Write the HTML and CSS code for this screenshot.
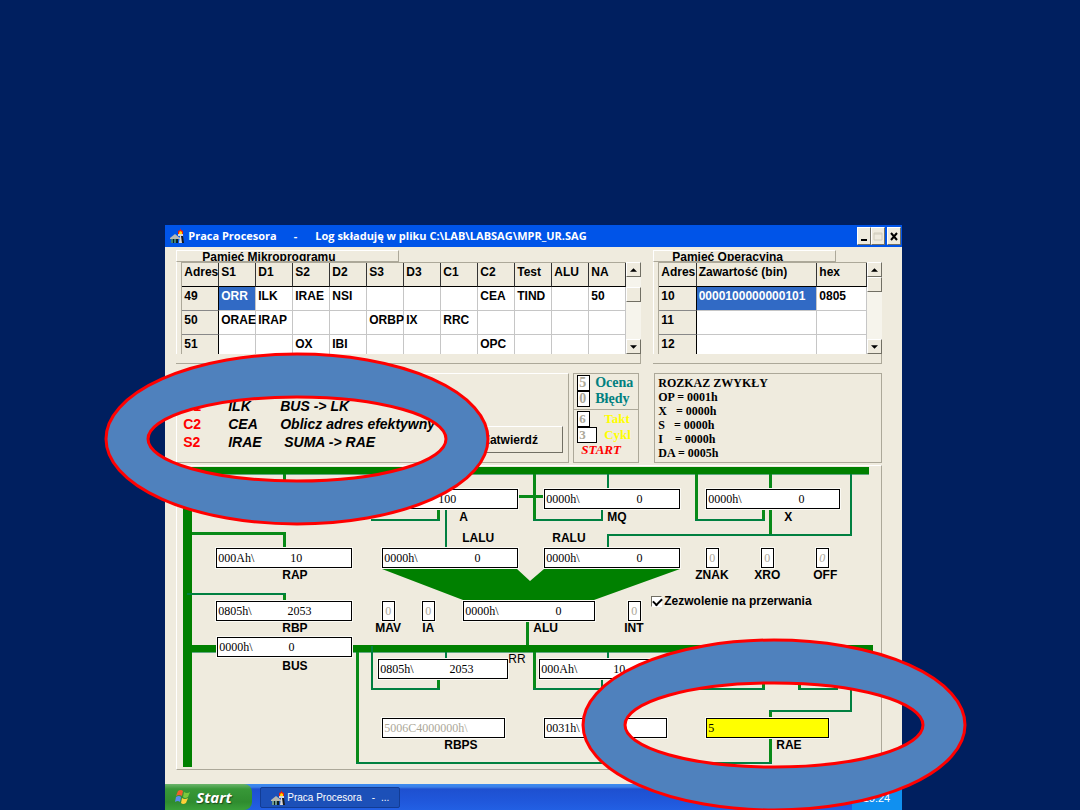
FILE: index.html
```html
<!DOCTYPE html>
<html lang="pl">
<head>
<meta charset="utf-8">
<title>Praca Procesora</title>
<link rel="stylesheet" href="styles.css">
</head>
<body>
<main class="slide">
<div class="screen">
  <header class="titlebar">
    <svg class="app-icon" viewBox="0 0 16 16" aria-hidden="true">
      <path d="M1 10l5-4 5 4v1H1z" fill="#b8b8b0"/>
      <path d="M2 11h2v4H2zM5 11h2v4H5z" fill="#3c8078"/>
      <path d="M4 11h1v4H4zM7 11h2v4H7z" fill="#102020"/>
      <path d="M9 6h5v2h-1l1 7h-4l1-7H9z" fill="#d8d8d8"/>
      <path d="M12 8h2l1 7h-2z" fill="#181818"/>
      <path d="M11 0l1 2 2 1v3H9V3l2-1z" fill="#f02010"/>
      <path d="M11 3l2 1v2h-3V5z" fill="#ffd800"/>
    </svg>
    <span class="title-name">Praca Procesora</span>
    <span class="title-dash">-</span>
    <span class="title-log">Log składuję w pliku C:\LAB\LABSAG\MPR_UR.SAG</span>
    <span class="win-buttons">
      <button type="button" class="win-btn" aria-label="Minimalizuj"><svg viewBox="0 0 12 14"><path d="M3 11h6" stroke="#000" stroke-width="2"/></svg></button>
      <button type="button" class="win-btn" aria-label="Maksymalizuj" disabled><svg viewBox="0 0 12 14"><path d="M2 4h8v7H2zM2 5h8" stroke="#d0ccbc" fill="none"/></svg></button>
      <button type="button" class="win-btn win-close" aria-label="Zamknij"><svg viewBox="0 0 12 14"><path d="M3 4l6 7M9 4l-6 7" stroke="#000" stroke-width="2"/></svg></button>
    </span>
  </header>

  <div class="work">
    <div class="row row-memory">
      <section class="group">
        <h2 class="legend">Pamięć Mikroprogramu</h2>
        <div class="grid-wrap">
          <table class="grid">
            <thead><tr><th>Adres</th><th>S1</th><th>D1</th><th>S2</th><th>D2</th><th>S3</th><th>D3</th><th>C1</th><th>C2</th><th>Test</th><th>ALU</th><th>NA</th></tr></thead>
            <tbody>
              <tr><th>49</th><td class="selected">ORR</td><td>ILK</td><td>IRAE</td><td>NSI</td><td></td><td></td><td></td><td>CEA</td><td>TIND</td><td></td><td>50</td></tr>
              <tr><th>50</th><td>ORAE</td><td>IRAP</td><td></td><td></td><td>ORBP</td><td>IX</td><td>RRC</td><td></td><td></td><td></td><td></td></tr>
              <tr class="cut"><th>51</th><td></td><td></td><td>OX</td><td>IBI</td><td></td><td></td><td></td><td>OPC</td><td></td><td></td><td></td></tr>
            </tbody>
          </table>
          <div class="scroll">
            <button type="button" class="arrow" aria-label="W górę"><svg viewBox="0 0 8 4"><path d="M0 4l4-4 4 4z"/></svg></button>
            <div class="track track-low"><div class="thumb"></div></div>
            <button type="button" class="arrow" aria-label="W dół"><svg viewBox="0 0 8 4"><path d="M0 0h8L4 4z"/></svg></button>
          </div>
        </div>
        <div class="group-foot"></div>
      </section>
      <section class="group">
        <h2 class="legend legend-op">Pamięć Operacyjna</h2>
        <div class="grid-wrap">
          <table class="grid">
            <colgroup><col class="col-adr"><col class="col-bin"><col class="col-hex"></colgroup>
            <thead><tr><th>Adres</th><th>Zawartość (bin)</th><th>hex</th></tr></thead>
            <tbody>
              <tr><th>10</th><td class="selected">0000100000000101</td><td>0805</td></tr>
              <tr><th>11</th><td></td><td></td></tr>
              <tr class="cut"><th>12</th><td></td><td></td></tr>
            </tbody>
          </table>
          <div class="scroll">
            <button type="button" class="arrow" aria-label="W górę"><svg viewBox="0 0 8 4"><path d="M0 4l4-4 4 4z"/></svg></button>
            <div class="track"><div class="thumb"></div></div>
            <button type="button" class="arrow" aria-label="W dół"><svg viewBox="0 0 8 4"><path d="M0 0h8L4 4z"/></svg></button>
          </div>
        </div>
        <div class="group-foot"></div>
      </section>
    </div>

    <div class="row row-status">
      <section class="panel micro">
        <dl class="ops">
          <dt>D1</dt><dd>ILK</dd><dd>BUS -&gt; LK</dd>
          <dt>C2</dt><dd>CEA</dd><dd>Oblicz adres efektywny</dd>
          <dt>S2</dt><dd>IRAE</dd><dd class="op-in">SUMA -&gt; RAE</dd>
        </dl>
        <button type="button" class="confirm">Zatwierdź</button>
      </section>
      <section class="panel score">
        <div class="score-part teal">
          <div class="score-line"><input id="ocena" class="tiny" value="5" readonly><label for="ocena">Ocena</label></div>
          <div class="score-line"><input id="bledy" class="tiny" value="0" readonly><label for="bledy">Błędy</label></div>
        </div>
        <div class="score-part yellow">
          <div class="score-line"><input id="takt" class="tiny" value="6" readonly><label for="takt">Takt</label></div>
          <div class="score-line"><input id="cykl" class="tiny tiny-wide" value="3" readonly><label for="cykl">Cykl</label></div>
          <div class="start-text">START</div>
        </div>
      </section>
      <section class="panel order">
        <p>ROZKAZ ZWYKŁY</p>
        <p>OP = 0001h</p>
        <p>X   = 0000h</p>
        <p>S   = 0000h</p>
        <p>I    = 0000h</p>
        <p>DA = 0005h</p>
      </section>
    </div>

    <section class="diagram">
      <svg class="wires" viewBox="176 465 706 304" width="706" height="304" aria-hidden="true">
        <g class="bus">
          <path d="M183 467.500H869M183 474.500H869M183 645.500H873M187 652.500H873" class="edge"/>
          <path d="M183 467h686v7H183zM183 474h9v293h-9zM187 645h686v7H187z"/>
          <path d="M382 569H517L530 581L544 569H680L594 600H463z"/>
        </g>
        <g class="thick">
          <path d="M284.500 474V482M192 533.500H284.500V548M284.500 595V601"/>
          <path d="M438.500 509V520M517 496.500H544M534.500 474V520M696.500 474V520M763.500 509V520M770.500 474V489M770.500 509V535"/>
          <path d="M527.500 622V645M438.500 678V689M534.500 652V689M763.500 680V689M799.500 680V689M770.500 712V718M770.500 738V763M357.500 652V763"/>
        </g>
        <g class="thin">
          <path d="M187 594H286M371 520H440M446 509V548M533 520H602V509M608 474V489M695 520H765M608 548V535H851V474"/>
          <path d="M446 652V658M372 646V689H440M533 689H765M602 678V689M608 652V658M798 689H838M851 652V711H769M356 763H772"/>
        </g>
      </svg>

      <input id="a" class="reg reg-a" value="                  100" readonly><label for="a" class="tag tag-a">A</label>
      <input id="mq" class="reg reg-mq" value="0000h\                   0" readonly><label for="mq" class="tag tag-mq">MQ</label>
      <input id="x" class="reg reg-x" value="0000h\                   0" readonly><label for="x" class="tag tag-x">X</label>
      <input id="rap" class="reg reg-rap" value="000Ah\            10" readonly><label for="rap" class="tag tag-rap">RAP</label>
      <input id="lalu" class="reg reg-lalu" value="0000h\                   0" readonly><label for="lalu" class="tag tag-lalu">LALU</label>
      <input id="ralu" class="reg reg-ralu" value="0000h\                   0" readonly><label for="ralu" class="tag tag-ralu">RALU</label>
      <input id="znak" class="reg flag reg-znak" value="0" readonly><label for="znak" class="tag tag-znak">ZNAK</label>
      <input id="xro" class="reg flag reg-xro" value="0" readonly><label for="xro" class="tag tag-xro">XRO</label>
      <input id="off" class="reg flag reg-off" value="0" readonly><label for="off" class="tag tag-off">OFF</label>
      <input id="rbp" class="reg reg-rbp" value="0805h\            2053" readonly><label for="rbp" class="tag tag-rbp">RBP</label>
      <input id="bus" class="reg reg-bus" value="0000h\            0" readonly><label for="bus" class="tag tag-bus">BUS</label>
      <input id="mav" class="reg flag reg-mav" value="0" readonly><label for="mav" class="tag tag-mav">MAV</label>
      <input id="ia" class="reg flag reg-ia" value="0" readonly><label for="ia" class="tag tag-ia">IA</label>
      <input id="alu" class="reg reg-alu" value="0000h\                   0" readonly><label for="alu" class="tag tag-alu">ALU</label>
      <input id="int" class="reg flag reg-int" value="0" readonly><label for="int" class="tag tag-int">INT</label>
      <input id="rr" class="reg reg-rr" value="0805h\            2053" readonly><label for="rr" class="tag tag-rr">RR</label>
      <input class="reg reg-lk" aria-label="LK" value="000Ah\            10" readonly>
      <input id="rbps" class="reg dim reg-rbps" value="5006C4000000h\" readonly><label for="rbps" class="tag tag-rbps">RBPS</label>
      <input class="reg reg-lr" aria-label="LR" value="0031h\" readonly>
      <input id="rae" class="reg reg-rae" value="5" readonly><label for="rae" class="tag tag-rae">RAE</label>
      <label class="interrupts"><input type="checkbox" checked>Zezwolenie na przerwania</label>
    </section>
  </div>

  <footer class="taskbar">
    <button type="button" class="start">
      <svg class="flag-icon" viewBox="0 0 16 16" aria-hidden="true">
        <path d="M3 2q3-2 5 0L7 7Q4 5 1 7z" fill="#f0602c"/>
        <path d="M9 3q3 2 6 0l-2 5q-3 2-5 0z" fill="#7cc83c"/>
        <path d="M1 8q3-2 5 0l-1 5Q3 11 0 13z" fill="#5c8cf0"/>
        <path d="M7 9q3 2 6 0l-2 5q-3 2-5 0z" fill="#fcd038"/>
      </svg>
      Start
    </button>
    <button type="button" class="task">
      <svg class="app-icon" viewBox="0 0 16 16" aria-hidden="true">
        <path d="M1 10l5-4 5 4v1H1z" fill="#b8b8b0"/>
        <path d="M2 11h2v4H2zM5 11h2v4H5z" fill="#6c9890"/>
        <path d="M4 11h1v4H4zM7 11h2v4H7z" fill="#102020"/>
        <path d="M9 6h5v2h-1l1 7h-4l1-7H9z" fill="#d8d8d8"/>
        <path d="M12 8h2l1 7h-2z" fill="#181818"/>
        <path d="M11 0l1 2 2 1v3H9V3l2-1z" fill="#f02010"/>
        <path d="M11 3l2 1v2h-3V5z" fill="#ffd800"/>
      </svg>
      <span class="task-name">Praca Procesora</span><span class="task-dash">-</span><span>...</span>
    </button>
    <time class="tray">10:24</time>
  </footer>

  <svg class="ring ring-micro" viewBox="-195 -88 390 176" width="390" height="176" aria-hidden="true"><path d="M-191 0a191 85 0 1 0 382 0a191 85 0 1 0-382 0zM-149 0a149 42 0 1 0 298 0a149 42 0 1 0-298 0z"/></svg>
  <svg class="ring ring-rae" viewBox="-195 -88 390 176" width="390" height="176" aria-hidden="true"><path d="M-191 0a191 85 0 1 0 382 0a191 85 0 1 0-382 0zM-149 0a149 42 0 1 0 298 0a149 42 0 1 0-298 0z"/></svg>
</div>
</main>
</body>
</html>
```
FILE: styles.css
```css
* { box-sizing: border-box; }

body {
  margin: 0;
  background: #001f5f;
  color: #000;
  font: bold 12px/14px "Liberation Sans", Arial, sans-serif;
}

.slide {
  min-height: 100vh;
  padding: 225px 16.5% 0 15.3%;
  overflow: hidden;
}

.screen {
  position: relative;
  min-width: 737px;
  background: #efebde;
}

button, input { font: inherit; color: inherit; margin: 0; }

/* Title bar */
.titlebar {
  display: flex;
  align-items: center;
  height: 22px;
  padding: 0 1px 0 4px;
  background: #0054e8;
  color: #fff;
  font: bold 11px/14px "Open Sans", "Noto Sans", sans-serif;
  white-space: pre;
}
.app-icon { width: 16px; height: 16px; flex: none; }
.title-name { margin-left: 3px; }
.title-dash { margin: 0 18px 0 17px; }
.win-buttons { display: flex; margin-left: auto; }
.win-btn {
  width: 14px;
  height: 18px;
  padding: 0;
  border: 1px solid;
  border-color: #fff #716f64 #716f64 #fff;
  background: #efebde;
}
.win-btn svg { display: block; width: 12px; height: 14px; }
.win-close { margin-left: 2px; }

/* Work area */
.work { padding: 3px 20px 14px 11px; }
.row { display: grid; }
.row-memory { grid-template-columns: 465fr 229fr; column-gap: 12px; }
.row-status {
  grid-template-columns: 393fr 66fr 239fr;
  column-gap: 4px;
  margin: 9px 0 2px;
}
.order { margin-left: 11px; }

.legend {
  width: 48%;
  height: 12px;
  margin: 0;
  padding-left: 25px;
  overflow: hidden;
  border: 1px solid;
  border-color: #fff #aca899 #aca899 #fff;
  font: inherit;
  line-height: 12px;
  white-space: nowrap;
}
.legend-op { width: 80%; padding-left: 18px; }
.grid-wrap { display: flex; padding-left: 4px; border-left: 1px solid #fff; }
.group-foot {
  height: 10px;
  border: 1px solid #aca899;
  border-width: 0 1px 1px 0;
}
.grid {
  flex: 1;
  width: 0;
  table-layout: fixed;
  border-spacing: 0;
  border-top: 1px solid #aca899;
  border-left: 1px solid #aca899;
  background: #fff;
}
.col-adr { width: 18%; }
.col-bin { width: 58%; }
.col-hex { width: 24%; }
.grid th, .grid td {
  height: 24px;
  padding: 2px 0 0 2px;
  border: 1px solid #c6c6c6;
  border-width: 0 1px 1px 0;
  font-weight: bold;
  text-align: left;
  vertical-align: top;
  white-space: nowrap;
}
.grid th { background: #efebde; }
.grid thead th { border-bottom-color: #000; border-right-color: #333; }
.grid tbody th { border-right-color: #000; border-bottom-color: #888; }
.grid .cut > * { height: 19px; border-bottom: 0; }
.grid td.selected { background: #316ac5; color: #fff; }

.scroll { display: flex; flex-direction: column; width: 15px; }
.arrow {
  display: grid;
  place-items: center;
  height: 15px;
  padding: 0;
  border: 1px solid;
  border-color: #fff #716f64 #716f64 #fff;
  background: #efebde;
}
.arrow svg { width: 7px; height: 4px; }
.track { flex: 1; background: #f6f4ec; }
.track-low { padding-top: 10px; }
.thumb {
  height: 15px;
  border: 1px solid;
  border-color: #fff #716f64 #716f64 #fff;
  background: #efebde;
}

/* Status row */
.panel { border: 1px solid #aca899; height: 90px; }
.micro {
  display: flex;
  justify-content: space-between;
  align-items: flex-end;
  padding: 0 5px 9px 6px;
  border-color: #fff #aca899 #aca899 #fff;
}
.ops {
  display: grid;
  grid-template-columns: 45px 52px auto;
  margin: 0 0 2px;
  font-size: 14px;
  line-height: 18px;
  white-space: nowrap;
}
.ops dt { color: #f00; }
.ops dd { margin: 0; font-style: italic; }
.ops .op-in { padding-left: 4px; }
.confirm {
  width: 106px;
  height: 27px;
  margin-left: -60px;
  padding: 0;
  border: 1px solid;
  border-color: #fff #716f64 #716f64 #fff;
  background: #efebde;
}
.score { font: bold 14px/16px "Liberation Serif", "Times New Roman", serif; }
.score-part { padding: 1px 0 2px 3px; }
.score-part + .score-part { border-top: 1px solid #aca899; }
.score-line { display: flex; }
.score-line label { margin-left: 5px; }
.teal { color: #008080; }
.yellow { color: #ff0; font-size: 13px; }
.yellow .score-line label { margin-left: 14px; }
.yellow .score-line .tiny-wide + label { margin-left: 7px; }
.tiny {
  width: 13px;
  height: 16px;
  padding: 0 1px;
  border: 1px solid #000;
  background: #fff;
  color: #aca899;
}
.tiny-wide { width: 20px; }
.start-text { padding-left: 4px; color: #f00; font-style: italic; line-height: 14px; }
.order {
  padding: 2px 3px;
  font: bold 12px/14px "Liberation Serif", "Times New Roman", serif;
}
.order p { margin: 0; white-space: pre; }

/* Processor diagram: registers are placed freely over the wiring */
.diagram {
  position: relative;
  height: 305px;
  border: 1px solid;
  border-color: #fff #aca899 #aca899 #fff;
}
.wires { position: absolute; left: -1px; top: -1px; }
.bus { fill: #008000; }
.edge { stroke: #60a880; }
.thick, .thin { fill: none; }
.thick { stroke: #088a18; stroke-width: 3; }
.thin { stroke: #008040; stroke-width: 2; }

.reg {
  position: absolute;
  height: 20px;
  padding: 0 1px;
  border: 1px solid #000;
  outline: 1px solid #fbfaf4;
  background: #fff;
  font: 12px/18px "Liberation Serif", "Times New Roman", serif;
}
.flag, .dim { color: #aca899; }
.flag { padding: 0 2px; }
.reg-a { left: 205px; top: 23px; width: 136px; }
.reg-mq { left: 367px; top: 23px; width: 136px; }
.reg-x { left: 529px; top: 23px; width: 134px; }
.reg-rap { left: 39px; top: 82px; width: 136px; }
.reg-lalu { left: 205px; top: 82px; width: 136px; }
.reg-ralu { left: 367px; top: 82px; width: 136px; }
.reg-znak { left: 529px; top: 82px; width: 13px; }
.reg-xro { left: 584px; top: 82px; width: 13px; }
.reg-off { left: 639px; top: 82px; width: 13px; font-style: italic; }
.reg-rbp { left: 39px; top: 135px; width: 136px; }
.reg-bus { left: 40px; top: 171px; width: 135px; }
.reg-mav { left: 205px; top: 135px; width: 13px; }
.reg-ia { left: 245px; top: 135px; width: 13px; }
.reg-alu { left: 286px; top: 135px; width: 132px; }
.reg-int { left: 451px; top: 135px; width: 13px; }
.reg-rr { left: 201px; top: 193px; width: 130px; }
.reg-lk { left: 362px; top: 193px; width: 130px; }
.reg-rbps { left: 205px; top: 252px; width: 123px; }
.reg-lr { left: 367px; top: 252px; width: 123px; }
.reg-rae { left: 529px; top: 252px; width: 123px; background: #ff0; }

.tag { position: absolute; }
.tag-a { left: 282px; top: 44px; }
.tag-mq { left: 430px; top: 44px; }
.tag-x { left: 607px; top: 44px; }
.tag-lalu { left: 285px; top: 65px; }
.tag-ralu { left: 375px; top: 65px; }
.tag-rap { left: 105px; top: 102px; }
.tag-znak { left: 518px; top: 102px; }
.tag-xro { left: 577px; top: 102px; }
.tag-off { left: 636px; top: 102px; }
.tag-rbp { left: 105px; top: 155px; }
.tag-mav { left: 198px; top: 155px; }
.tag-ia { left: 245px; top: 155px; }
.tag-alu { left: 356px; top: 155px; }
.tag-int { left: 447px; top: 155px; }
.tag-bus { left: 105px; top: 193px; }
.tag-rr { left: 331px; top: 186px; font-weight: normal; }
.tag-rbps { left: 267px; top: 272px; }
.tag-rae { left: 599px; top: 272px; }

.interrupts {
  position: absolute;
  left: 474px;
  top: 128px;
  display: flex;
  align-items: center;
  gap: 2px;
}
.interrupts input {
  appearance: none;
  width: 11px;
  height: 11px;
  border: 1px solid;
  border-color: #716f64 #fff #fff #716f64;
  background: #fff;
}
.interrupts input:checked::before {
  content: "";
  display: block;
  width: 7px;
  height: 4px;
  margin: 1px;
  border: solid #000;
  border-width: 0 0 2px 2px;
  transform: rotate(-45deg);
}

/* Taskbar */
.taskbar {
  display: flex;
  height: 26px;
  background: linear-gradient(#3c8cf0, #3c80e8 3px, #1e50d0 5px, #2058dc 18px, #2260e4);
  color: #fff;
}
.start {
  display: flex;
  align-items: center;
  gap: 5px;
  width: 87px;
  padding: 0 0 0 10px;
  border: 0;
  border-radius: 0 8px 8px 0;
  background: linear-gradient(#6cb46c, #389838 5px, #2f8c2f 18px, #3aa03a);
  font: italic bold 15px/20px "Open Sans", "Noto Sans", sans-serif;
  text-shadow: 1px 1px 1px #1c4c1c;
}
.flag-icon { width: 16px; height: 16px; }
.task {
  display: flex;
  align-items: center;
  width: 140px;
  margin: 3px 0 2px 8px;
  padding: 0 9px;
  border: 1px solid #123c94;
  border-radius: 2px;
  background: #1c50b8;
  font: 10px/14px "Liberation Sans", Arial, sans-serif;
  white-space: nowrap;
}
.task-name { margin-left: 1px; }
.task-dash { margin: 0 6px 0 10px; }
.tray {
  width: 50px;
  margin-left: auto;
  padding: 7px 12px 0 0;
  background: linear-gradient(#30a8f4, #1090f0 6px, #1090f0);
  font: 11px/14px "Liberation Sans", Arial, sans-serif;
  text-align: right;
}

/* Highlight rings */
.ring { position: absolute; overflow: visible; pointer-events: none; }
.ring path { fill: #4f81bd; fill-rule: evenodd; stroke: #f00; stroke-width: 3; }
.ring-micro { left: -63px; top: 126px; }
.ring-rae { left: 414px; top: 412px; }
```
